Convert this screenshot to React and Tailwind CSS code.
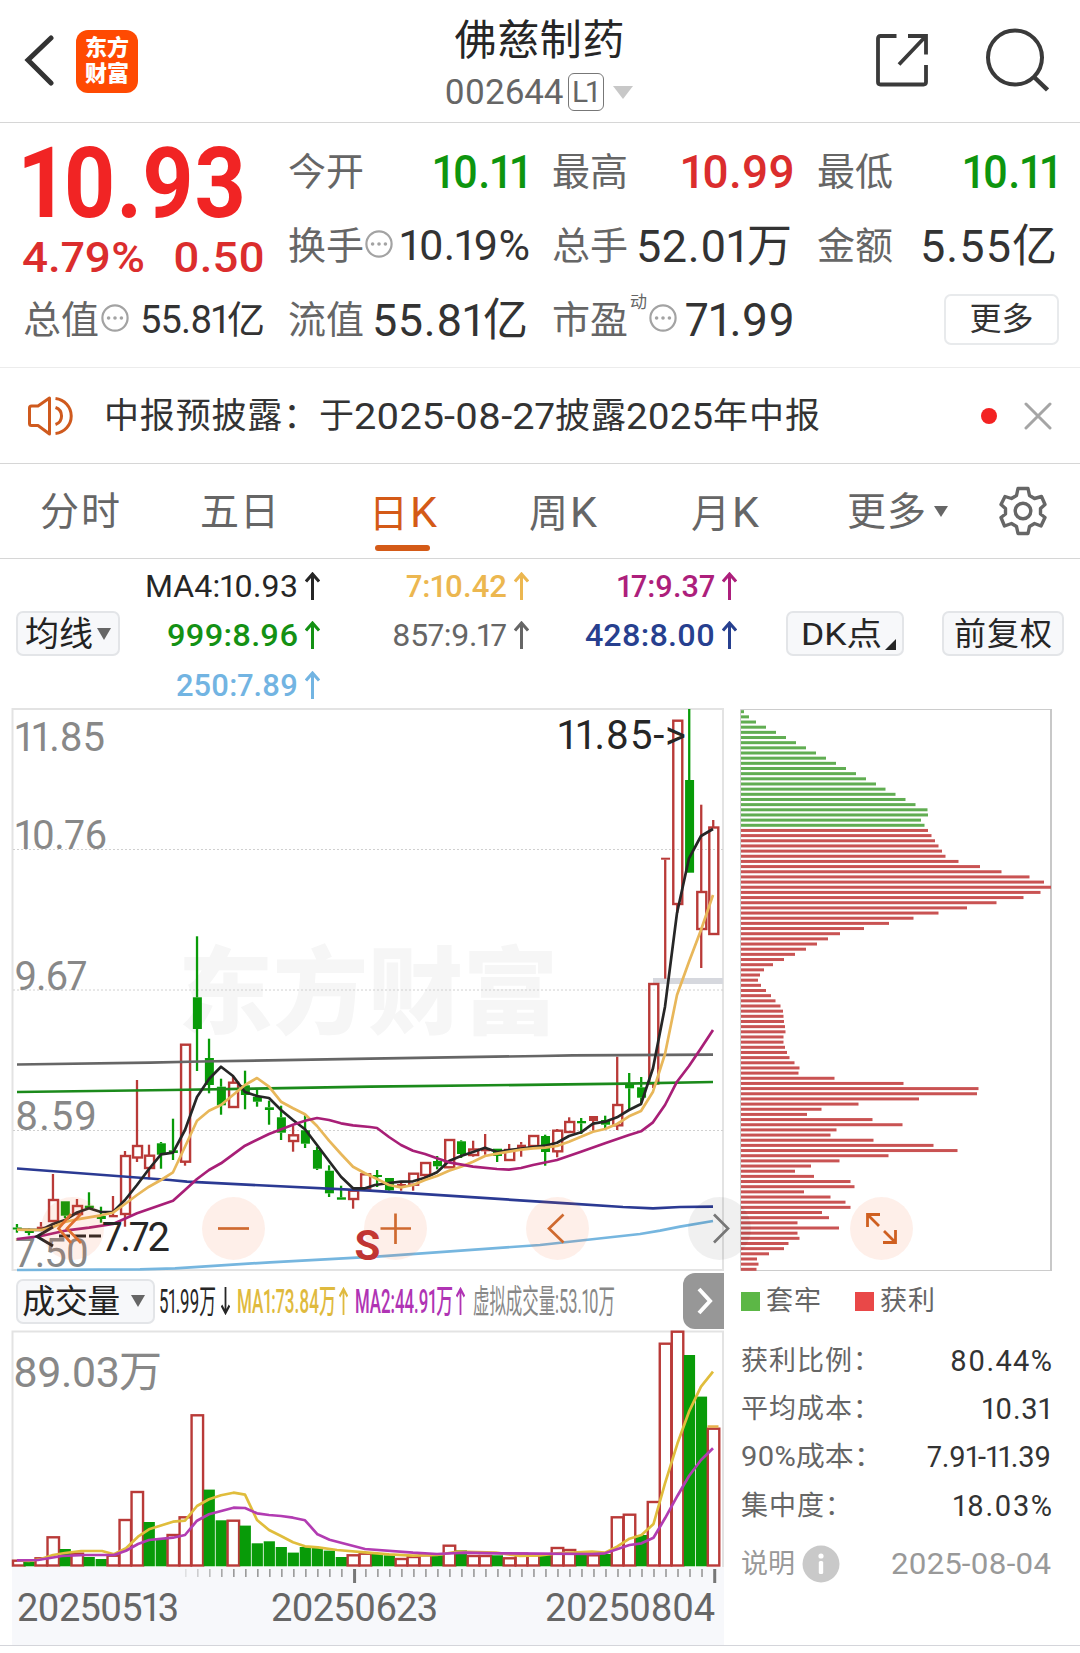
import React, { useLayoutEffect, useRef, useState } from 'react';

// x of the first candle and distance between two trading days
const X0 = 16.8;
const STEP = 12.005;

const RED = '#b93a38';
const GREEN = '#089b08';

// [color, bodyTop, bodyBottom, high, low]; 'f' = filled red
const candles = [
  ['g', 1227.5, 1229.5, 1224, 1232.7], ['g', 1229, 1233, 1228.7, 1235.3], ['f', 1226.7, 1229.7, 1222, 1230.7],
  ['r', 1200, 1221, 1174, 1221], ['g', 1201.3, 1215.7, 1201.3, 1218], ['r', 1206, 1214, 1199, 1214],
  ['g', 1205.7, 1208, 1192.3, 1208], ['g', 1216, 1219, 1206.7, 1222.7], ['f', 1215, 1217.3, 1196, 1217.3],
  ['r', 1156, 1214, 1151, 1226.7], ['r', 1146, 1157.5, 1080, 1162], ['r', 1155.7, 1168, 1144.7, 1179.3],
  ['g', 1143.3, 1154.7, 1142, 1168.7], ['g', 1150.3, 1153, 1118.7, 1160], ['r', 1044.7, 1161.7, 1044.7, 1165.7],
  ['g', 997.3, 1029, 936.3, 1071], ['g', 1058, 1085, 1038.7, 1093.3], ['g', 1086.7, 1105.3, 1078.7, 1114.7],
  ['r', 1082.7, 1107, 1076.7, 1107], ['g', 1085.3, 1095, 1070.7, 1109.3], ['g', 1096.7, 1101.7, 1089.3, 1106.7],
  ['g', 1107.3, 1110, 1100.7, 1124.7], ['g', 1117.3, 1132.7, 1105.7, 1140], ['r', 1135.3, 1141, 1126, 1151.7],
  ['g', 1130.3, 1143.7, 1115.3, 1148], ['g', 1150, 1168.7, 1146.7, 1170], ['g', 1170.7, 1193.3, 1165.3, 1197],
  ['g', 1197.3, 1199.7, 1185.7, 1199.7], ['r', 1190.7, 1199, 1190, 1208.7], ['r', 1174.3, 1188.7, 1174.3, 1188.7],
  ['g', 1175, 1177, 1170, 1187], ['g', 1178, 1190.3, 1178, 1191], ['f', 1184, 1186.7, 1181.7, 1190.7],
  ['r', 1173.7, 1184.7, 1173.7, 1190.7], ['r', 1163, 1175, 1163, 1178], ['g', 1161, 1166.3, 1156, 1169.3],
  ['r', 1140, 1167.3, 1140, 1167.3], ['g', 1141.3, 1154, 1140.3, 1158], ['r', 1149.5, 1155, 1140.7, 1156.7],
  ['f', 1149, 1151.3, 1134, 1154.7], ['g', 1148.7, 1156, 1148.7, 1162], ['r', 1150, 1160, 1144, 1160],
  ['f', 1144.7, 1148.7, 1142, 1156.7], ['r', 1136, 1146, 1136, 1146], ['g', 1136, 1152, 1134.7, 1165.7],
  ['r', 1130.7, 1151.3, 1129, 1157.3], ['r', 1122, 1132, 1117.3, 1132], ['g', 1121, 1123.3, 1118, 1134],
  ['f', 1116, 1121, 1116, 1130.7], ['g', 1120, 1124.7, 1115.7, 1128.7], ['r', 1105, 1125.3, 1056.7, 1130],
  ['g', 1083.3, 1088.3, 1073, 1110], ['g', 1087.3, 1097.7, 1077, 1103], ['r', 984, 1083.5, 984, 1088],
  ['f', 857.7, 859.7, 857.7, 978.7], ['r', 720.7, 904, 720.7, 913], ['g', 780, 872.7, 709, 872.7],
  ['r', 892, 929, 804.7, 968], ['r', 827.5, 934, 820, 934],
];

const maLines = [
  { color: '#666666', pts: '17,1064.5 150,1062.6 200,1061.5 370,1058.6 540,1056 573,1055.3 713,1054.7' },
  { color: '#1b8a1b', pts: '17,1092 170,1090 370,1086.6 626,1083.7 713,1082' },
  { color: '#2b3a93', pts: '17,1168.5 170,1180 187,1181.7 370,1190.7 567,1203.3 623,1207 653,1208.3 680,1207 713,1206.7' },
  { color: '#76b6df', pts: '17,1270 140,1269.3 175,1268.3 270,1262.3 380,1256.3 540,1245 640,1234 660,1230.6 680,1226.7 713,1221' },
  {
    color: '#262626',
    pts: '17,1229.7 41,1230 53,1224 65,1220 77,1212.5 89,1208.3 101,1212 113,1212 125,1200 137,1185 149,1169 161,1154.3 173,1152.7 185,1130 197,1097 209,1079 221,1066.7 233,1076 245,1092 257,1096 269,1098 281,1110 293,1120 305,1129.3 317,1145 329,1161 341,1176.7 353,1188.3 365,1188.3 375,1185 389,1183 401,1181.7 413,1181.3 425,1177.7 437,1172.3 449,1161 461,1156 473,1152 485,1147.7 497,1152 509,1150 521,1148.7 533,1147 545,1145.7 557,1142.7 569,1136 581,1132.3 593,1123.7 605,1121.7 617,1117.3 629,1110 641,1104 653,1068.3 665,1006.7 677,913 689,858.3 701,836 713,829',
  },
  {
    color: '#e8b75a',
    pts: '17,1229.7 41,1230 53,1227 65,1222 77,1219.3 89,1217.3 101,1215.3 113,1212.7 125,1204 137,1195 149,1186.7 161,1180 173,1172.3 185,1146.7 197,1120.7 209,1110.7 221,1105 233,1095 245,1085 257,1078 269,1086.7 281,1101.7 293,1108.3 305,1114.3 317,1126 329,1140.7 341,1154 353,1166.7 365,1173.3 377,1179 389,1185 401,1187.3 413,1185 425,1180 437,1176 449,1170.7 461,1166.7 473,1161.7 485,1156 497,1153.7 509,1151.7 521,1149.7 533,1148.3 545,1147.7 557,1146 569,1141.7 581,1136.7 593,1131.7 605,1129 617,1124 629,1116.3 641,1111 653,1091.7 665,1054 677,995 689,961.7 701,930 713,895',
  },
  {
    color: '#a81f77',
    pts: '17,1239 41,1236 65,1230.7 89,1227.7 113,1224 137,1213.3 173,1200.7 185,1190 197,1179 209,1170 221,1163.3 245,1145.7 269,1134 293,1124.7 305,1120.7 317,1118 329,1120 341,1123.3 353,1125.3 370,1127 377,1128 389,1137 401,1145 413,1150.7 425,1154 437,1158.3 449,1162.3 473,1166.7 497,1169 509,1169.7 521,1168 533,1165 557,1160 581,1151.7 605,1143.3 629,1135 641,1131.3 653,1122.3 665,1105 677,1081.7 689,1066 701,1048.3 713,1030',
  },
];

// [color, bar height]
const volumes = [
  ['r', 5.3], ['g', 3.7], ['r', 7.7], ['r', 28.7], ['g', 16.3], ['r', 12.3], ['g', 8.3], ['g', 6.3], ['r', 10.3], ['r', 46],
  ['r', 74], ['g', 43.3], ['g', 27.3], ['r', 31], ['r', 48.7], ['r', 150.7], ['g', 75.7], ['g', 45], ['r', 45.3], ['g', 39.7],
  ['g', 22], ['g', 24], ['g', 18.3], ['g', 12.7], ['g', 18.3], ['g', 17.3], ['g', 14.7], ['g', 8.3], ['r', 10.7], ['r', 12.3],
  ['g', 12], ['g', 10], ['r', 7], ['r', 9], ['r', 10.7], ['g', 10], ['r', 20.3], ['g', 15], ['r', 10], ['r', 10],
  ['g', 10], ['r', 7.7], ['r', 12.3], ['r', 10.7], ['g', 11.3], ['r', 18], ['r', 16], ['g', 11.3], ['r', 10.7], ['g', 11.3],
  ['r', 48.7], ['r', 51.3], ['g', 30.3], ['r', 64], ['r', 222.3], ['r', 234.3], ['g', 210.3], ['g', 168.7], ['r', 137.3],
];

const volumeLines = [
  {
    color: '#e0bd3c',
    pts: '17,1560.3 29,1561 41,1559 53,1555 65,1553 81,1551 102,1551 114,1554.3 126,1548.3 138,1536.7 149,1529.3 173,1521.7 185,1520.7 197,1506 209,1499.3 221,1495.3 233.5,1492.7 245,1494.7 257,1520 269,1530 281,1536 293,1542.3 305,1546.3 318,1547.3 337,1550 365,1552.3 389,1554.3 413,1555.7 437,1555 458,1551.7 496,1552.7 520,1556 540,1555.3 557,1553.3 592,1551.7 605,1552.7 617,1546.7 629.5,1538.7 641.5,1535 653.5,1524 665,1483.3 677.5,1443.3 689,1411.7 701,1386.7 713,1371.7',
  },
  {
    color: '#b23cb2',
    pts: '17,1560.3 38,1560 62,1556 86,1555 114,1555 126,1550.7 138,1544 149,1540 173,1537.7 185,1535 197,1520.7 209,1514.3 233.5,1507.7 245,1508 257,1513.3 269,1515 281,1516 293,1517.7 305,1520.3 317.5,1534.3 329.5,1539.7 365,1549 413,1552.7 437,1554 465,1552.7 496,1553.3 540,1553.7 592,1554 605,1553.3 617,1549.3 629.5,1545 641.5,1543.3 653.5,1537.7 665,1518.3 677.5,1495.7 689,1476 701,1460 713,1448.3',
  },
];

// Cost distribution, top price to bottom price
const chipsLocked = [3, 8, 15, 25, 35, 45, 55, 65, 75, 85, 95, 105, 115, 125, 135, 144.5, 154.5, 164.5, 174.5, 186.5, 187, 180, 183.5];
const chipsProfit = [
  187, 190.5, 194, 197.5, 201, 204.5, 217.5, 239, 260.5, 288.5, 303, 310, 299.5, 282.5, 255.5, 226, 197.5, 172.5, 148, 123,
  99, 87, 76, 65, 54, 43, 32, 23, 19, 17, 20, 25, 30, 34.5, 39.5, 42, 42.5, 43, 44, 44.5,
  42.5, 42.5, 44, 46, 48.5, 53.5, 58.5, 57.5, 93.5, 162.5, 237.5, 236, 178, 117.5, 80.5, 66, 131.5, 161.5, 95.5, 89.5,
  132.5, 192.5, 216.5, 147.5, 98.5, 70, 54, 73, 109.5, 113.5, 63, 89.5, 104.5, 109.5, 81, 88, 56.5, 98, 56.5, 58.5,
  47.5, 43, 28, 16, 17.5, 15.5,
];

// Squeezes or spreads its text until it fills the width given by className
const Fit = ({ children, className = '', stretch = false }) => {
  const box = useRef(null);
  const text = useRef(null);
  const [style, setStyle] = useState({});

  useLayoutEffect(() => {
    const room = box.current.clientWidth;
    const natural = text.current.getBoundingClientRect().width;
    const gaps = children.length - 1;
    if (stretch) {
      setStyle({ transform: `scaleX(${room / natural})` });
    } else if (gaps > 0) {
      setStyle({ letterSpacing: `${(room - natural) / gaps}px` });
    }
  }, []);

  return (
    <span ref={box} className={`block shrink-0 whitespace-nowrap ${className}`}>
      <span ref={text} className="inline-block origin-left" style={style}>
        {children}
      </span>
    </span>
  );
};

const Triangle = ({ className = '' }) => (
  <svg viewBox="0 0 14 11" preserveAspectRatio="none" className={`shrink-0 ${className}`} fill="currentColor">
    <path d="M0 0H14L7 11Z" />
  </svg>
);

const Arrow = ({ down = false, className = 'w-[15px] h-[28px]' }) => (
  <svg
    viewBox="0 0 15 28"
    preserveAspectRatio="none"
    className={`shrink-0 ${down ? 'rotate-180' : ''} ${className}`}
    fill="none"
    stroke="currentColor"
    strokeWidth="3"
  >
    <path d="M7.5 28V2M1 9.5L7.5 2L14 9.5" />
  </svg>
);

const Dots = ({ className = '' }) => (
  <svg viewBox="0 0 28 28" className={`w-[28px] h-[28px] shrink-0 ${className}`} fill="#a3a3a3">
    <circle cx="14" cy="14" r="12.6" fill="none" stroke="#a3a3a3" strokeWidth="2.2" />
    <circle cx="7.6" cy="14" r="1.8" />
    <circle cx="14" cy="14" r="1.8" />
    <circle cx="20.4" cy="14" r="1.8" />
  </svg>
);

const Header = () => (
  <header className="h-[123px] border-b border-[#d6d6d6] flex items-start justify-between pl-[24px] pr-[31px]">
    <div className="flex items-center mt-[30px] w-[330px]">
      <svg viewBox="0 0 30 52" className="w-[30px] h-[52px] -mt-[3px]" fill="none" stroke="#333" strokeWidth="5" strokeLinecap="round">
        <path d="M27 4L4 26L27 49" strokeLinejoin="miter" />
      </svg>
      <div className="ml-[22px] w-[62px] h-[63px] rounded-[12px] bg-[#ff4a02] text-white font-black text-[22px] leading-[26px] pb-[2px] flex flex-col items-center justify-center">
        <span>东方</span>
        <span>财富</span>
      </div>
    </div>
    <div className="flex flex-col items-center pt-[17px]">
      <h1 className="text-[42px] leading-[47px] text-[#262626] ml-[6px]">
        <Fit className="w-[170px]">佛慈制药</Fit>
      </h1>
      <div className="flex items-center text-[#666] mt-[10px] ml-[4px]">
        <Fit className="w-[119px] text-[35px] leading-[38px]">002644</Fit>
        <div className="ml-[4px] -mt-[3px] w-[36px] h-[38px] rounded-[6px] border-[1.5px] border-[#777] flex items-center justify-center">
          <Fit className="w-[27px] text-[30px] leading-none">L1</Fit>
        </div>
        <Triangle className="w-[20px] h-[13px] ml-[9px] -mt-[2px] text-[#c8c8c8]" />
      </div>
    </div>
    <div className="w-[330px] flex justify-end mt-[28px]">
      <svg viewBox="0 0 54 54" className="w-[54px] h-[54px] mt-[5px]" fill="none" stroke="#3a3a3a" strokeWidth="3.8">
        <path d="M21.500 3H5.500Q3 3 3 5.500V49Q3 51.500 5.500 51.500H48.500Q51 51.500 51 49V32" />
        <path d="M33 3H51V21.500M51 3L24 31.500" />
      </svg>
      <svg viewBox="0 0 64 66" className="w-[64px] h-[66px] ml-[56px]" fill="none" stroke="#3a3a3a" strokeWidth="4">
        <circle cx="30" cy="29.500" r="27" />
        <path d="M49 49L62.500 62" strokeWidth="4.500" />
      </svg>
    </div>
  </header>
);

const Quote = () => (
  <section className="h-[245px] border-b border-[#ececec] pl-[23px] pt-[12px]">
    <div className="grid grid-cols-[240px_239px_240px_240px] grid-rows-[74px_74px_74px] gap-x-[25px] text-[38px] leading-none text-[#666] whitespace-nowrap">
      <div className="row-span-2 flex flex-col">
        <div className="h-[97px] flex items-center text-[#f12424] font-bold">
          <Fit stretch className="w-[226px] text-[99px] -ml-[3px]">10.93</Fit>
        </div>
        <div className="h-[51px] flex items-center justify-between text-[43px] text-[#db2d2d] font-medium">
          <Fit stretch className="w-[123px] -ml-[1px]">4.79%</Fit>
          <Fit stretch className="w-[92px] -mr-[2px]">0.50</Fit>
        </div>
      </div>
      <div className="flex items-center justify-between">
        <span>今开</span>
        <Fit stretch className="w-[97px] text-[46px] text-[#0e950e] font-medium -mr-[3px]">10.11</Fit>
      </div>
      <div className="flex items-center justify-between">
        <span>最高</span>
        <Fit stretch className="w-[114px] text-[46px] text-[#db2d2d] font-medium -mr-[3px]">10.99</Fit>
      </div>
      <div className="flex items-center justify-between">
        <span>最低</span>
        <Fit stretch className="w-[97px] text-[46px] text-[#0e950e] font-medium -mr-[3px]">10.11</Fit>
      </div>

      <div className="flex items-center">
        <span>换手</span>
        <Dots className="ml-[1px] -mt-[5px]" />
        <Fit stretch className="w-[130px] text-[42px] text-[#333] ml-[7px]">10.19%</Fit>
      </div>
      <div className="flex items-center justify-between">
        <span>总手</span>
        <Fit className="w-[156px] text-[45px] text-[#333]">52.01万</Fit>
      </div>
      <div className="flex items-center justify-between">
        <span>金额</span>
        <Fit className="w-[137px] text-[45px] text-[#333]">5.55亿</Fit>
      </div>

      <div className="flex items-center">
        <span>总值</span>
        <Dots className="ml-[2px] -mt-[5px]" />
        <Fit className="w-[125px] text-[38px] text-[#333] ml-[11px]">55.81亿</Fit>
      </div>
      <div className="flex items-center justify-between">
        <span>流值</span>
        <Fit className="w-[156px] text-[45px] text-[#333] -mr-[1px]">55.81亿</Fit>
      </div>
      <div className="flex items-center">
        <span>市盈</span>
        <span className="text-[17px] ml-[2px] -mt-[36px]">动</span>
        <Dots className="ml-[2px] -mt-[5px]" />
        <Fit className="w-[110px] text-[46px] text-[#333] ml-[8px]">71.99</Fit>
      </div>
      <div className="flex items-center justify-end">
        <button className="w-[115px] h-[51px] rounded-[7px] border-2 border-[#e8eaec] text-[32px] text-[#333] -mt-[2px] -mr-[2px]">更多</button>
      </div>
    </div>
  </section>
);

const Notice = () => (
  <section className="h-[96px] border-b border-[#d6d6d6] flex items-center pl-[27px] pr-[28px]">
    <svg viewBox="0 0 48 42" className="w-[48px] h-[42px]" fill="none" stroke="#cf5a1e" strokeWidth="3">
      <path d="M22.500 3V39L11 30.500H4.500Q2.500 30.500 2.500 28.500V13Q2.500 11 4.500 11H11Z" strokeLinejoin="round" />
      <path d="M28.500 12.500A9 9 0 0 1 28.500 29.500M28.500 3.500A17.600 17.600 0 0 1 28.500 38.500" />
    </svg>
    <p className="flex items-center ml-[29px] pt-[2px] text-[35px] leading-none text-[#333]">
      <Fit className="w-[250px]">中报预披露：于</Fit>
      <Fit stretch className="w-[201px] text-[37px]">2025-08-27</Fit>
      <Fit className="w-[71px]">披露</Fit>
      <Fit stretch className="w-[87px] text-[37px]">2025</Fit>
      <Fit className="w-[107px]">年中报</Fit>
    </p>
    <span className="ml-auto w-[16px] h-[16px] rounded-full bg-[#f32222]" />
    <svg viewBox="0 0 28 28" className="w-[28px] h-[28px] ml-[27px]" fill="none" stroke="#a5a5a5" strokeWidth="3" strokeLinecap="round">
      <path d="M2 2L26 26M26 2L2 26" />
    </svg>
  </section>
);

const Tabs = () => (
  <nav className="h-[95px] border-b border-[#d6d6d6] flex items-center pt-[2px] text-[39px] leading-none text-[#666] pl-[40px] pr-[33px] whitespace-nowrap">
    <Fit className="w-[80px]">分时</Fit>
    <Fit className="w-[79px] ml-[80px]">五日</Fit>
    <div className="relative h-full flex items-center w-[160px] ml-[90px] text-[#d45a17]">
      <span>日<span className="text-[43px] ml-[2px]">K</span></span>
      <span className="absolute left-[6px] bottom-[7px] w-[55px] h-[6px] rounded-full bg-[#d45a17]" />
    </div>
    <span className="w-[162px]">周<span className="text-[43px] ml-[2px]">K</span></span>
    <span className="w-[156px]">月<span className="text-[43px] ml-[2px]">K</span></span>
    <Fit className="w-[79px]">更多</Fit>
    <Triangle className="w-[14px] h-[11px] ml-[8px] -mt-[2px]" />
    <svg viewBox="0 0 48 50" className="w-[48px] h-[50px] ml-auto -mt-[2px]" fill="none" stroke="#666" strokeWidth="3.400" strokeLinejoin="round">
      <path d="M19 2.500H29L30.500 9.500L35.500 12.500L42.500 10.500L46 18.500L41.500 22.500V28L46 31.500L42 40L35.500 37.500L30.500 40.500L29 47.500H19L17.500 40.500L12.500 37.500L5.500 40L2 31.500L6.500 28V22.500L2 18.500L6 10.500L12.500 12.500L17.500 9.500Z" />
      <circle cx="24" cy="25" r="7.800" />
    </svg>
  </nav>
);

const MaPanel = () => (
  <section className="h-[143px] flex text-[32px] leading-none pl-[16px]">
    <div className="w-[104px] pt-[52px]">
      <button className="w-[104px] h-[45px] rounded-[7px] border-2 border-[#e3e5e8] bg-[#f7f8fa] text-[34px] text-[#222] flex items-center justify-center gap-[4px]">
        <span>均线</span>
        <Triangle className="w-[14px] h-[12px] text-[#666]" />
      </button>
    </div>
    <div className="w-[200px] pt-[2px] flex flex-col items-end">
      <div className="h-[49px] shrink-0 flex items-center gap-[7px] text-[#262626]">
        <Fit className="w-[153px]">MA4:10.93</Fit>
        <Arrow />
      </div>
      <div className="h-[50px] shrink-0 flex items-center gap-[7px] text-[#149114]">
        <Fit stretch className="w-[131px] font-medium">999:8.96</Fit>
        <Arrow />
      </div>
      <div className="h-[49px] shrink-0 flex items-center gap-[7px] text-[#72b4e2]">
        <Fit stretch className="w-[122px] font-medium">250:7.89</Fit>
        <Arrow />
      </div>
    </div>
    <div className="w-[209px] pt-[2px] flex flex-col items-end">
      <div className="h-[49px] shrink-0 flex items-center gap-[7px] text-[#ecb750]">
        <Fit stretch className="w-[101px] font-medium">7:10.42</Fit>
        <Arrow />
      </div>
      <div className="h-[50px] shrink-0 flex items-center gap-[7px] text-[#666]">
        <Fit className="w-[115px]">857:9.17</Fit>
        <Arrow />
      </div>
    </div>
    <div className="w-[208px] pt-[2px] flex flex-col items-end">
      <div className="h-[49px] shrink-0 flex items-center gap-[7px] text-[#ad1f7c]">
        <Fit stretch className="w-[98px] font-medium">17:9.37</Fit>
        <Arrow />
      </div>
      <div className="h-[50px] shrink-0 flex items-center gap-[7px] text-[#27408f]">
        <Fit stretch className="w-[130px] font-medium">428:8.00</Fit>
        <Arrow />
      </div>
    </div>
    <div className="flex pt-[52px] ml-[49px] gap-[38px] text-[#262626]">
      <button className="w-[118px] h-[45px] rounded-[7px] border-2 border-[#e3e5e8] bg-[#f7f8fa] flex items-center pl-[9px]">
        <Fit stretch className="w-[81px]">DK点</Fit>
        <svg viewBox="0 0 11 11" className="w-[11px] h-[11px] ml-[7px] mt-[22px]">
          <path d="M11 0V11H0Z" fill="currentColor" />
        </svg>
      </button>
      <button className="w-[122px] h-[45px] rounded-[7px] border-2 border-[#e3e5e8] bg-[#f7f8fa] flex items-center justify-center">
        <Fit className="w-[98px]">前复权</Fit>
      </button>
    </div>
  </section>
);

const Candle = ({ candle, index }) => {
  const [kind, top, bottom, high, low] = candle;
  const cx = X0 + STEP * index;
  const color = kind === 'g' ? GREEN : RED;
  return (
    <g>
      {high < top && <rect x={cx - 1} y={high} width="2.3" height={top - high} fill={color} />}
      {low > bottom && <rect x={cx - 1} y={bottom} width="2.3" height={low - bottom} fill={color} />}
      {kind === 'r' ? (
        <rect x={cx - 3.8} y={top} width="9" height={bottom - top} fill="none" stroke={color} strokeWidth="2.4" />
      ) : (
        <rect x={cx - 4} y={top} width="9" height={bottom - top} fill={color} />
      )}
    </g>
  );
};

const PriceChart = () => (
  <svg viewBox="0 702 730 572" className="relative z-10 block w-[730px] h-[572px] overflow-visible">
    <text x="178" y="1027" fontSize="95" fontWeight="900" fill="#f6f6f6" textLength="380">东方财富</text>
    <path d="M12.500 709H723V1270H12.500Z" fill="none" stroke="#e3e3e3" strokeWidth="2" />
    <path d="M13 849.500H723M13 990H723M13 1130.500H723" stroke="#d0d0d0" strokeWidth="1" strokeDasharray="2 2" />
    <rect x="653" y="978" width="70" height="6" fill="#d6d8de" />
    <g fontSize="40" fill="#888">
      <text x="15" y="751" textLength="90">11.85</text>
      <text x="15" y="849" textLength="92">10.76</text>
      <text x="14.500" y="990" textLength="73">9.67</text>
      <text x="15" y="1130" textLength="82">8.59</text>
      <text x="15" y="1267" textLength="74">7.50</text>
    </g>
    {candles.map((candle, i) => (
      <Candle key={i} candle={candle} index={i} />
    ))}
    {maLines.map((line) => (
      <polyline key={line.color} points={line.pts} fill="none" stroke={line.color} strokeWidth="2.700" strokeLinejoin="round" />
    ))}
    <g fill="#262626" fontSize="40">
      <text x="558" y="749" textLength="128">11.85-&gt;</text>
      <text x="102" y="1251" textLength="68">7.72</text>
    </g>
    <path d="M53 1227L37 1236.500L53 1246M59 1236H70M74 1236H86M89 1236H101" fill="none" stroke="#262626" strokeWidth="3" />
    <text x="354.500" y="1259.500" fontSize="42" fontWeight="700" fill="#bf3434" textLength="25">S</text>

    {/* Zoom and scroll handles */}
    <g fill="#f9642b" fillOpacity="0.100">
      <circle cx="72.500" cy="1228.500" r="31.500" />
      <circle cx="233.500" cy="1228.500" r="31.500" />
      <circle cx="395.500" cy="1228.500" r="31.500" />
      <circle cx="557.500" cy="1228.500" r="31.500" />
    </g>
    <circle cx="719.500" cy="1228.500" r="31.500" fill="#000" fillOpacity="0.060" />
    <g fill="none" stroke="#cf6a30" strokeWidth="2.700">
      <path d="M71 1214L58.500 1228.500L71 1243M81 1214L67 1228.500L81 1243" stroke="#e0702f" />
      <path d="M218 1228.500H249" />
      <path d="M380.500 1228.500H411M395.500 1213.500V1244" />
      <path d="M563.500 1214.500L549 1228.500L563.500 1242.500" />
      <path d="M714 1214.500L728 1228.500L714 1242.500" stroke="#777" />
    </g>
  </svg>
);

const VolumeBar = () => (
  <div className="h-[56px] flex items-center pb-[2px] pl-[16px] text-[33px] leading-none">
    <button className="w-[139px] h-[45px] rounded-[7px] border-2 border-[#e3e5e8] bg-[#f7f8fa] text-[#222] flex items-center pl-[4px] gap-[11px]">
      <Fit className="w-[98px]">成交量</Fit>
      <Triangle className="w-[14px] h-[12px] text-[#666]" />
    </button>
    <Fit stretch className="w-[57px] ml-[4px] text-[#262626]">51.99万</Fit>
    <Arrow down className="w-[9px] h-[28px] ml-[5px] text-[#262626]" />
    <Fit stretch className="w-[99px] ml-[7px] text-[#dfba3e] font-medium">MA1:73.84万</Fit>
    <Arrow className="w-[9px] h-[28px] ml-[3px] text-[#dfba3e]" />
    <Fit stretch className="w-[98px] ml-[7px] text-[#b034b4] font-medium">MA2:44.91万</Fit>
    <Arrow className="w-[9px] h-[28px] ml-[3px] text-[#b034b4]" />
    <Fit stretch className="w-[142px] ml-[8px] text-[#888]">虚拟成交量:53.10万</Fit>
    <div className="ml-auto mr-[6px] w-[41px] h-[56px] rounded-l-[12px] bg-[#979797] flex items-center justify-center">
      <svg viewBox="0 0 16 28" className="w-[16px] h-[28px] ml-[3px]" fill="none" stroke="#fff" strokeWidth="4">
        <path d="M2 2L13 14L2 26" />
      </svg>
    </div>
  </div>
);

const VolumeChart = () => {
  const ticks = Array.from({ length: 45 }, (_, i) => 186 + i * STEP);
  return (
    <svg viewBox="0 1330 730 315" className="block w-[730px] h-[315px]">
      <rect x="12" y="1567" width="712" height="78" fill="#f7f8fb" />
      <path d="M12.500 1567V1331.500H723V1567" fill="none" stroke="#e3e3e3" strokeWidth="2" />
      {volumes.map(([kind, h], i) => {
        const cx = X0 + STEP * i;
        return kind === 'r' ? (
          <rect key={i} x={Math.max(cx - 5.3, 13)} y={1566 - h} width="11.500" height={h - 0.5} fill="#fff" stroke={RED} strokeWidth="2.400" />
        ) : (
          <rect key={i} x={cx - 5.2} y={1565.3 - h} width="11.200" height={h + 1} fill={GREEN} />
        );
      })}
      <path d="M707.500 1426.500H718.500" stroke="#e8b24c" strokeWidth="2.500" />
      {volumeLines.map((line) => (
        <polyline key={line.color} points={line.pts} fill="none" stroke={line.color} strokeWidth="2.700" strokeLinejoin="round" />
      ))}
      {ticks.map((x, i) => {
        const major = i === 14 || i === 44;
        return (
          <rect
            key={i}
            x={x - 1}
            y="1569"
            width={major ? 3 : 1.6}
            height={major ? 14 : 8}
            fill={major ? '#777' : '#999'}
            opacity={Math.min(1, 0.25 + i * 0.2)}
          />
        );
      })}
      <text x="13" y="1387" fontSize="43" fill="#888" textLength="149">89.03万</text>
      <g fontSize="38" fill="#666">
        <text x="17" y="1620.500" textLength="162">20250513</text>
        <text x="271" y="1620.500" textLength="167">20250623</text>
        <text x="545" y="1620.500" textLength="170">20250804</text>
      </g>
    </svg>
  );
};

const ChipChart = () => (
  <svg viewBox="730 702 350 572" className="block w-[350px] h-[572px]">
    <path d="M740.500 1270.500V709.500H1051V1270.500Z" fill="none" stroke="#ccc" strokeWidth="1" />
    <path d="M1051 709V1271" stroke="#c8c8c8" strokeWidth="2" />
    {chipsLocked.map((w, i) => (
      <rect key={i} x="741" y={710.2 + i * 5.163} width={w} height="3" fill="#61ad52" />
    ))}
    {chipsProfit.map((w, i) => (
      <rect key={i} x="741" y={710.2 + (i + chipsLocked.length) * 5.163} width={w} height="3" fill="#c95353" />
    ))}
    <circle cx="881.500" cy="1228.500" r="31.500" fill="#f9642b" fillOpacity="0.100" />
    <path
      d="M880 1214.500H867.500V1227M867.500 1214.500L879 1226M883 1242.500H895.500V1230M895.500 1242.500L884 1231"
      fill="none"
      stroke="#cf5f20"
      strokeWidth="2.800"
    />
  </svg>
);

const ChipStats = () => (
  <div className="pl-[11px] pr-[28px] text-[27px] leading-none text-[#666]">
    <div className="h-[54px] flex items-center">
      <span className="w-[19px] h-[19px] bg-[#5cb746]" />
      <Fit className="w-[55px] ml-[6px]">套牢</Fit>
      <span className="w-[19px] h-[19px] bg-[#e94848] ml-[34px]" />
      <Fit className="w-[55px] ml-[6px]">获利</Fit>
    </div>
    <div className="h-[48px] mt-[9px] flex items-center justify-between">
      <Fit className="w-[139px]">获利比例：</Fit>
      <Fit className="w-[102px] text-[29px] text-[#333]">80.44%</Fit>
    </div>
    <div className="h-[48px] flex items-center justify-between">
      <Fit className="w-[139px]">平均成本：</Fit>
      <Fit className="w-[69px] text-[29px] text-[#333] mr-[1px]">10.31</Fit>
    </div>
    <div className="h-[49px] flex items-center justify-between">
      <Fit stretch className="w-[142px]">90%成本：</Fit>
      <Fit className="w-[124px] text-[29px] text-[#333] mr-[1px]">7.91-11.39</Fit>
    </div>
    <div className="h-[48px] flex items-center justify-between">
      <Fit className="w-[111px]">集中度：</Fit>
      <Fit className="w-[99px] text-[29px] text-[#333]">18.03%</Fit>
    </div>
    <div className="h-[69px] flex items-center text-[#999]">
      <span>说明</span>
      <svg viewBox="0 0 38 38" className="w-[38px] h-[38px] ml-[7px] -mt-[2px]">
        <circle cx="19" cy="19" r="18.500" fill="#c9c9c9" />
        <circle cx="19" cy="11" r="2.600" fill="#fff" />
        <rect x="16.800" y="16" width="4.400" height="13" rx="1.500" fill="#fff" />
      </svg>
      <Fit stretch className="w-[160px] text-[29px] ml-auto mr-[1px]">2025-08-04</Fit>
    </div>
  </div>
);

const App = () => {
  return (
    <div className="w-[1080px] h-[1653px] bg-white overflow-hidden proportional-nums font-['Roboto','Noto_Sans_CJK_SC',sans-serif]">
      <Header />
      <Quote />
      <Notice />
      <Tabs />
      <MaPanel />
      <main className="flex h-[944px] border-b border-[#d4d5da]">
        <div className="w-[730px]">
          <PriceChart />
          <VolumeBar />
          <VolumeChart />
        </div>
        <div className="w-[350px]">
          <ChipChart />
          <ChipStats />
        </div>
      </main>
    </div>
  );
};

export default App;
